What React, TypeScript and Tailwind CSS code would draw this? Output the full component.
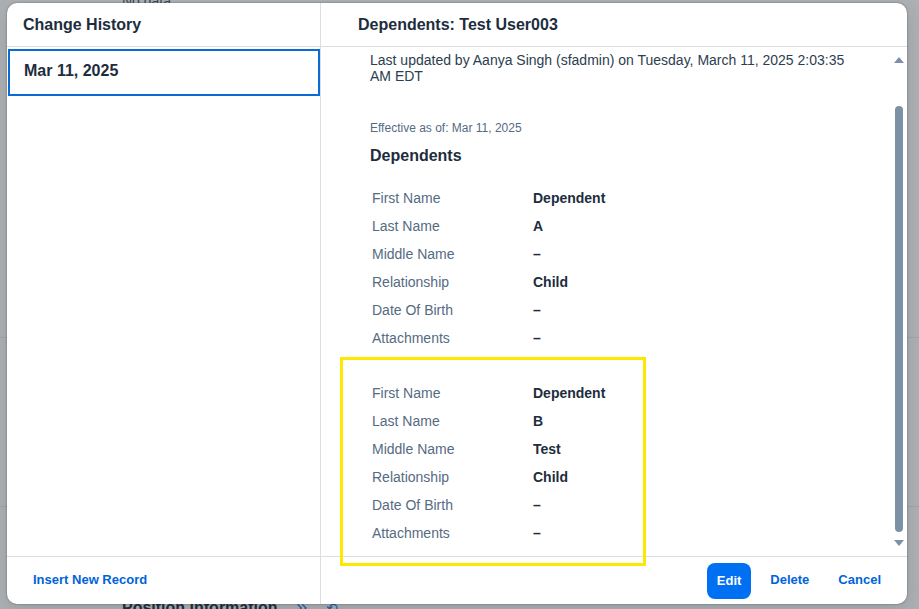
import { ChevronsRight } from 'lucide-react'

const groups = [
  [
    ['First Name', 'Dependent'],
    ['Last Name', 'A'],
    ['Middle Name', '–'],
    ['Relationship', 'Child'],
    ['Date Of Birth', '–'],
    ['Attachments', '–'],
  ],
  [
    ['First Name', 'Dependent'],
    ['Last Name', 'B'],
    ['Middle Name', 'Test'],
    ['Relationship', 'Child'],
    ['Date Of Birth', '–'],
    ['Attachments', '–'],
  ],
]

function FieldRow({ label, value }: { label: string; value: string }) {
  return (
    <div className="flex h-[28px] items-center">
      <div className="w-[163px] pl-[2px] text-[14px] text-[#556b82]">{label}</div>
      <div className="text-[14px] font-bold text-[#1d2d3e]">{value}</div>
    </div>
  )
}

export default function App() {
  return (
    <div
      className="relative h-[609px] w-[919px] overflow-hidden bg-[#aeb1b4]"
      style={{ fontFamily: '"Liberation Sans", Arial, sans-serif' }}
    >
      {/* page behind the dialog */}
      <div className="absolute left-[122px] top-[-9px] text-[14px] text-[#3b4a5a]">No data</div>
      <div className="absolute left-0 right-0 top-[337px] h-px bg-[#a1a5a9]" />
      <div className="absolute left-0 right-0 top-[506px] h-px bg-[#a1a5a9]" />
      <div className="absolute left-[122px] top-[596px] flex items-center gap-4">
        <span className="text-[16px] font-bold text-[#1d2d3e]">Position Information</span>
        <ChevronsRight className="h-4 w-4 text-[#1f5fae]" />
        <span className="text-[14px] text-[#1f5fae]">⟲</span>
      </div>

      {/* dialog */}
      <div className="absolute left-[7px] top-[3px] flex h-[601px] w-[900px] overflow-hidden rounded-[10px] bg-white shadow-[0_0_2px_rgba(30,40,50,0.55),0_6px_20px_rgba(30,40,50,0.15)]">
        {/* left column */}
        <div className="flex w-[314px] shrink-0 flex-col border-r border-[#dcdfe2]">
          <div className="flex h-[44px] shrink-0 items-center border-b border-[#dcdfe2] pl-[16px] text-[16px] font-bold text-[#1d2d3e]">
            Change History
          </div>
          <div className="flex-1 pt-[2px] pl-[1px]">
            <div className="flex h-[47px] w-[312px] items-center border-2 border-[#0a6ad6] pb-[3px] pl-[14px] text-[16px] font-bold text-[#1d2d3e]">
              Mar 11, 2025
            </div>
          </div>
          <div className="flex h-[48px] shrink-0 items-center border-t border-[#dcdfe2] pb-[1px] pl-[26px] text-[13px] font-semibold text-[#0064d9]">
            Insert New Record
          </div>
        </div>

        {/* right column */}
        <div className="flex min-w-0 flex-1 flex-col">
          <div className="flex h-[44px] shrink-0 items-center border-b border-[#dcdfe2] pl-[37px] text-[16px] font-bold text-[#1d2d3e]">
            Dependents: Test User003
          </div>
          <div className="flex min-h-0 flex-1">
            <div className="flex-1 pl-[49px] pt-[5px]">
              <p className="w-[490px] text-[14px] leading-[16px] text-[#2c3e50]">
                Last updated by Aanya Singh (sfadmin) on Tuesday, March 11, 2025 2:03:35 AM EDT
              </p>
              <div className="mt-[35px] text-[12px] text-[#556b82]">Effective as of: Mar 11, 2025</div>
              <div className="mt-[7px] text-[16px] font-bold text-[#1d2d3e]">Dependents</div>
              <div className="mt-[16px]">
                {groups[0].map(([l, v]) => (
                  <FieldRow key={'a' + l} label={l} value={v} />
                ))}
              </div>
              <div className="mt-[27px]">
                {groups[1].map(([l, v]) => (
                  <FieldRow key={'b' + l} label={l} value={v} />
                ))}
              </div>
            </div>
            {/* scrollbar */}
            <div className="flex w-[16px] shrink-0 flex-col items-center pt-[10px]">
              <div className="h-0 w-0 border-x-[5px] border-b-[6px] border-x-transparent border-b-[#7c90a6]" />
              <div className="mt-[43px] h-[426px] w-[8px] rounded-full bg-[#7c90a6]" />
              <div className="mt-[8px] h-0 w-0 border-x-[5px] border-t-[6px] border-x-transparent border-t-[#7c90a6]" />
            </div>
          </div>
          <div className="flex h-[48px] shrink-0 items-center justify-end gap-[9px] border-t border-[#dcdfe2] pr-[16px]">
            <button className="flex h-[36px] items-center rounded-[8px] bg-[#0070f2] px-[10px] text-[13px] font-bold text-white">
              Edit
            </button>
            <button className="flex h-[36px] items-center px-[10px] pb-[1px] text-[13px] font-semibold text-[#0064d9]">
              Delete
            </button>
            <button className="flex h-[36px] items-center px-[10px] pb-[1px] text-[13px] font-semibold text-[#0064d9]">
              Cancel
            </button>
          </div>
        </div>
      </div>

      {/* annotation highlight */}
      <div className="pointer-events-none absolute left-[340px] top-[357px] h-[209px] w-[306px] border-[3px] border-[#ffe800]" />
    </div>
  )
}
